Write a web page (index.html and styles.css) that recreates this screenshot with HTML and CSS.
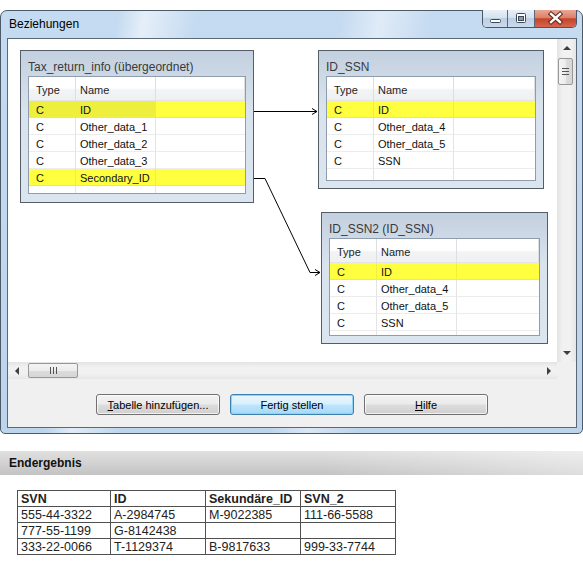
FILE: index.html
```html
<!DOCTYPE html>
<html lang="de">
<head>
    <meta charset="UTF-8">
    <title>Beziehungen</title>
    <link rel="stylesheet" href="styles.css">
</head>
<body>

    <div class="window">
        <div class="titlebar">
            <span class="title">Beziehungen</span>
            <div class="caption">
                <span class="cap-btn min">
                    <svg width="25" height="17" viewBox="0 0 25 17"><rect x="7.5" y="9.5" width="10" height="3" rx="1" fill="#fff" stroke="#3d4856"/></svg>
                </span>
                <span class="cap-btn max">
                    <svg width="26" height="17" viewBox="0 0 26 17"><rect x="8.5" y="3.5" width="9" height="9" rx="1" fill="#fff" stroke="#3d4856"/><rect x="10.5" y="6.5" width="5" height="4" fill="#8a98a8" stroke="#3d4856"/></svg>
                </span>
                <span class="cap-btn close">
                    <svg width="41" height="17" viewBox="0 0 41 17"><path d="M16 4 L25 12 M25 4 L16 12" stroke="#5b2418" stroke-width="4.4" stroke-linecap="square"/><path d="M16 4 L25 12 M25 4 L16 12" stroke="#fff" stroke-width="2.4" stroke-linecap="square"/></svg>
                </span>
            </div>
        </div>

        <div class="client">
            <div class="pane">
                <div class="canvas">
                    <svg class="links" width="549" height="323" viewBox="0 0 549 323">
                        <path d="M246 72.5 H309" />
                        <path d="M304 69.5 L309 72.5 L304 75.5" />
                        <path d="M246 139.5 H257 L302 233.5 H312" />
                        <path d="M307 230.5 L312 233.5 L307 236.5" />
                    </svg>

                    <div class="node node-parent">
                        <div class="node-title">Tax_return_info (übergeordnet)</div>
                        <div class="grid">
                            <div class="row head"><span>Type</span><span>Name</span><span></span></div>
                            <div class="grid-body">
                                <div class="row key focus"><span>C</span><span>ID</span><span></span></div>
                                <div class="row"><span>C</span><span>Other_data_1</span><span></span></div>
                                <div class="row"><span>C</span><span>Other_data_2</span><span></span></div>
                                <div class="row"><span>C</span><span>Other_data_3</span><span></span></div>
                                <div class="row key"><span>C</span><span>Secondary_ID</span><span></span></div>
                                <div class="row"><span></span><span></span><span></span></div>
                            </div>
                        </div>
                    </div>

                    <div class="node node-ssn">
                        <div class="node-title">ID_SSN</div>
                        <div class="grid">
                            <div class="row head"><span>Type</span><span>Name</span><span></span></div>
                            <div class="grid-body">
                                <div class="row key"><span>C</span><span>ID</span><span></span></div>
                                <div class="row"><span>C</span><span>Other_data_4</span><span></span></div>
                                <div class="row"><span>C</span><span>Other_data_5</span><span></span></div>
                                <div class="row"><span>C</span><span>SSN</span><span></span></div>
                                <div class="row"><span></span><span></span><span></span></div>
                            </div>
                        </div>
                    </div>

                    <div class="node node-ssn2">
                        <div class="node-title">ID_SSN2 (ID_SSN)</div>
                        <div class="grid">
                            <div class="row head"><span>Type</span><span>Name</span><span></span></div>
                            <div class="grid-body">
                                <div class="row key"><span>C</span><span>ID</span><span></span></div>
                                <div class="row"><span>C</span><span>Other_data_4</span><span></span></div>
                                <div class="row"><span>C</span><span>Other_data_5</span><span></span></div>
                                <div class="row"><span>C</span><span>SSN</span><span></span></div>
                                <div class="row"><span></span><span></span><span></span></div>
                            </div>
                        </div>
                    </div>
                </div>

                <div class="vscroll">
                    <span class="sb-btn"><i class="tri up"></i></span>
                    <span class="thumb thumb-v"><i class="grip-v"></i></span>
                    <span class="sb-fill"></span>
                    <span class="sb-btn"><i class="tri down"></i></span>
                </div>
                <div class="hscroll">
                    <span class="sb-btn"><i class="tri left"></i></span>
                    <span class="thumb thumb-h"><i class="grip-h"></i></span>
                    <span class="sb-fill"></span>
                    <span class="sb-btn"><i class="tri right"></i></span>
                </div>
                <div class="corner"></div>
            </div>

            <div class="buttons">
                <button class="btn"><u>T</u>abelle hinzufügen...</button>
                <button class="btn default">Fertig stellen</button>
                <button class="btn"><u>H</u>ilfe</button>
            </div>
        </div>
    </div>

    <div class="result-head">Endergebnis</div>
    <table class="result">
        <colgroup><col class="c1"><col class="c2"><col class="c3"><col class="c4"></colgroup>
        <tr><th>SVN</th><th>ID</th><th>Sekundäre_ID</th><th>SVN_2</th></tr>
        <tr><td>555-44-3322</td><td>A-2984745</td><td>M-9022385</td><td>111-66-5588</td></tr>
        <tr><td>777-55-1199</td><td>G-8142438</td><td></td><td></td></tr>
        <tr><td>333-22-0066</td><td>T-1129374</td><td>B-9817633</td><td>999-33-7744</td></tr>
    </table>

</body>
</html>
```

FILE: styles.css
```css
* {
    box-sizing: border-box;
}

html, body {
    margin: 0;
    padding: 0;
    background: #fff;
}

body {
    width: 583px;
    height: 564px;
    overflow: hidden;
    font-family: "Liberation Sans", Arial, sans-serif;
    color: #000;
}

/* window frame */
.window {
    margin-top: 10px;
    width: 583px;
    border: 1px solid #4d5a68;
    border-radius: 7px 7px 5px 5px;
    padding: 0 5px 5px 6px;
    background:
        linear-gradient(100deg, rgba(255,255,255,0) 0%, rgba(255,255,255,0) 18%, rgba(255,255,255,.55) 22%, rgba(255,255,255,0) 30%,
            rgba(255,255,255,0) 52%, rgba(255,255,255,.45) 58%, rgba(255,255,255,0) 66%, rgba(255,255,255,0) 100%),
        linear-gradient(#c5dbf1, #bcd4ec);
}

.titlebar {
    height: 27px;
    display: flex;
    justify-content: space-between;
    align-items: flex-start;
}

.title {
    font-size: 12px;
    line-height: 14px;
    padding: 6px 0 0 2px;
}

.caption {
    display: flex;
    margin-top: -1px;
    height: 18px;
    border: 1px solid #4a5664;
    border-top: none;
    border-radius: 0 0 5px 5px;
    overflow: hidden;
}

.cap-btn {
    display: block;
    height: 17px;
    background: linear-gradient(#e8eff8 0%, #d6e2ef 45%, #bccfe4 50%, #cbdbed 100%);
}

.cap-btn svg {
    display: block;
}

.cap-btn.min { width: 25px; border-right: 1px solid #5b6775; }
.cap-btn.max { width: 27px; border-right: 1px solid #5b6775; }
.cap-btn.close {
    width: 41px;
    background: linear-gradient(#eaa797 0%, #dc8067 45%, #c5432a 52%, #d3674d 100%);
}

/* client area */
.client {
    border: 1px solid #5c6875;
    background: #f0f0f0;
}

.pane {
    display: grid;
    grid-template-columns: 549px 19px;
    grid-template-rows: 323px 17px;
}

.canvas {
    position: relative;
    background: #fff;
    overflow: hidden;
}

.links {
    position: absolute;
    left: 0;
    top: 0;
}

.links path {
    fill: none;
    stroke: #000;
    stroke-width: 1;
}

/* table nodes */
.node {
    position: absolute;
    border: 1px solid #555d66;
    padding: 0 7px 7px 7px;
    background: linear-gradient(#c3d0df, #d9e3ee 40%, #dbe5ef);
}

.node-parent { left: 12px; top: 11px; width: 234px; padding-bottom: 8px; }
.node-ssn    { left: 310px; top: 11px; width: 226px; }
.node-ssn2   { left: 313px; top: 173px; width: 227px; }

.node-title {
    height: 25px;
    padding-top: 9px;
    font-size: 12px;
    line-height: 14px;
    color: #3a3a3a;
    white-space: nowrap;
}

.grid {
    border: 1px solid #8f9cab;
    background: #fff;
}

.grid-body {
    overflow: hidden;
}

.node-parent .grid-body { height: 92px; }
.node-ssn .grid-body    { height: 79px; }
.node-ssn2 .grid-body   { height: 72px; }

.row {
    display: grid;
    grid-template-columns: 47px 80px 1fr;
    height: 17px;
    font-size: 11px;
    line-height: 18px;
    color: #111;
}

.row span {
    border-right: 1px solid #e4e4e4;
    border-bottom: 1px solid #ececec;
    white-space: nowrap;
    overflow: hidden;
}

.row span:first-child { padding-left: 7px; }
.row span:nth-child(2) { padding-left: 4px; }
.row span:last-child { border-right: none; }

.row.head {
    height: 24px;
    line-height: 26px;
    color: #1e1e1e;
    background: linear-gradient(#ffffff 0%, #ffffff 45%, #f2f3f5 55%, #eef0f2 100%);
}

.row.head span {
    border-right: 1px solid #dcdee1;
    border-bottom: 1px solid #e2e4e7;
}

.row.key span {
    background: #ffff40;
    border-color: #f0f03a;
}

.row.key.focus span:nth-child(-n+2) {
    background: #eeee3c;
}

/* scrollbars */
.vscroll,
.hscroll {
    display: flex;
    background: #eeeeee;
}

.vscroll {
    flex-direction: column;
    background: linear-gradient(90deg, #e3e3e3, #f1f1f1 30%, #f1f1f1 70%, #e6e6e6);
}

.hscroll {
    background: linear-gradient(#e3e3e3, #f1f1f1 30%, #f1f1f1 70%, #e6e6e6);
}

.sb-btn {
    display: flex;
    align-items: center;
    justify-content: center;
    flex: none;
}

.vscroll .sb-btn { height: 18px; }
.hscroll .sb-btn { width: 17px; }

.sb-fill {
    flex: 1;
}

.tri {
    display: block;
    width: 0;
    height: 0;
    border: 4px solid transparent;
}

.tri.up    { border-bottom-color: #3f3f3f; border-top-width: 0; }
.tri.down  { border-top-color: #3f3f3f; border-bottom-width: 0; }
.tri.left  { border-right-color: #3f3f3f; border-left-width: 0; }
.tri.right { border-left-color: #3f3f3f; border-right-width: 0; }

.thumb {
    display: flex;
    align-items: center;
    justify-content: center;
    border: 1px solid #979797;
    border-radius: 2px;
    flex: none;
}

.thumb-v {
    width: 15px;
    height: 27px;
    margin: 1px 0 0 1px;
    background: linear-gradient(90deg, #f4f4f4, #ececec 50%, #dcdcdc 52%, #d6d6d6);
}

.thumb-h {
    width: 50px;
    height: 15px;
    margin: 1px 0 0 3px;
    background: linear-gradient(#f4f4f4, #ececec 50%, #dcdcdc 52%, #d6d6d6);
}

.grip-v {
    display: block;
    width: 7px;
    height: 7px;
    background: repeating-linear-gradient(#555 0 1px, transparent 1px 3px);
}

.grip-h {
    display: block;
    width: 7px;
    height: 7px;
    background: repeating-linear-gradient(90deg, #555 0 1px, transparent 1px 3px);
}

.corner {
    background: #f0f0f0;
}

/* dialog buttons */
.buttons {
    height: 48px;
    display: flex;
    justify-content: center;
    gap: 10px;
    padding-top: 15px;
}

.btn {
    width: 124px;
    height: 21px;
    padding: 0;
    border: 1px solid #707070;
    border-radius: 3px;
    background: linear-gradient(#f2f2f2 0%, #ebebeb 48%, #dddddd 52%, #cfcfcf 100%);
    font-family: "Liberation Sans", Arial, sans-serif;
    font-size: 11px;
    color: #000;
    box-shadow: inset 0 0 0 1px rgba(255, 255, 255, 0.7);
}

.btn.default {
    border-color: #3c7fb1;
    background: linear-gradient(#eaf6fd 0%, #d9f0fc 48%, #bee6fd 52%, #a7d9f5 100%);
    box-shadow: inset 0 0 0 1px #8ed3f5;
}

/* result section */
.result-head {
    margin-top: 17px;
    height: 24px;
    padding-left: 9px;
    font-size: 12px;
    font-weight: bold;
    line-height: 24px;
    color: #111;
    background:
        linear-gradient(90deg, rgba(255,255,255,0) 55%, rgba(255,255,255,.45) 100%),
        linear-gradient(#e0e0e0, #d2d2d2 50%, #c3c3c3);
}

.result {
    margin: 15px 0 0 17px;
    border-collapse: collapse;
    table-layout: fixed;
    width: 378px;
    font-size: 12.5px;
    color: #222;
}

.result col.c1 { width: 93px; }
.result col.c2,
.result col.c3,
.result col.c4 { width: 95px; }

.result th,
.result td {
    height: 16px;
    padding: 0 3px;
    border: 1px solid #505050;
    text-align: left;
    line-height: 14px;
    white-space: nowrap;
}

.result th {
    font-weight: bold;
}
```
